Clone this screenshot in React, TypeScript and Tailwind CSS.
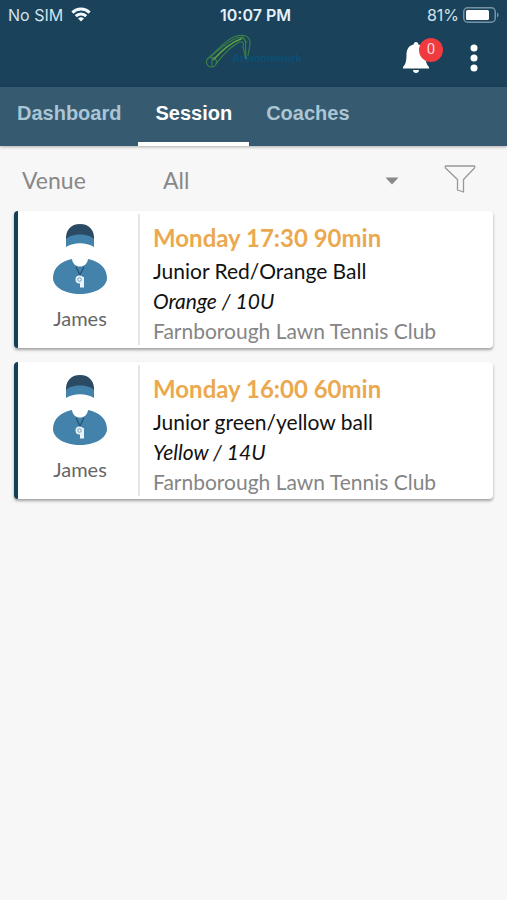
import React from "react";

type Session = {
  coach: string;
  time: string;
  title: string;
  level: string;
  venue: string;
};

const sessions: Session[] = [
  {
    coach: "James",
    time: "Monday 17:30 90min",
    title: "Junior Red/Orange Ball",
    level: "Orange / 10U",
    venue: "Farnborough Lawn Tennis Club",
  },
  {
    coach: "James",
    time: "Monday 16:00 60min",
    title: "Junior green/yellow ball",
    level: "Yellow / 14U",
    venue: "Farnborough Lawn Tennis Club",
  },
];

function StatusBar() {
  return (
    <div className="grid h-7 grid-cols-[1fr_auto_1fr] items-center px-2 pt-px font-['Inter',sans-serif] text-[16px] leading-5 text-[#d3e2ec]">
      <div className="flex items-center gap-2">
        <span>No SIM</span>
        <svg viewBox="0 0 20 15" className="h-[15px] w-5" fill="none" stroke="#f4f9fc" strokeWidth="3">
          <path d="M1.4 5.6a12.3 12.3 0 0 1 17.2 0" />
          <path d="M4.8 9.1a7.4 7.4 0 0 1 10.4 0" />
          <path d="M10 14.6 7 11.6a4.3 4.3 0 0 1 6 0Z" fill="#f4f9fc" stroke="none" />
        </svg>
      </div>
      <div className="pl-1 text-center font-semibold whitespace-nowrap text-[#e6f0f6]">10:07 PM</div>
      <div className="flex items-center justify-end gap-1">
        <span>81%</span>
        <svg viewBox="0 0 36 16" className="h-4 w-9" fill="none">
          <rect x="0.75" y="0.75" width="31.5" height="14.5" rx="4" stroke="#7793a5" strokeWidth="1.5" />
          <rect x="3" y="3" width="23" height="10" rx="1.5" fill="#fff" />
          <path d="M34 5.5c2 .8 2 4.2 0 5Z" fill="#7793a5" />
        </svg>
      </div>
    </div>
  );
}

function Logo() {
  return (
    <svg viewBox="0 0 96 48" className="h-12 w-24" fill="none" role="img" aria-label="Club logo">
      <text x="26" y="28" fill="#0a5075" fontSize="11" fontWeight="700" fontFamily="Liberation Sans, sans-serif">
        Anhomework
      </text>
      <path d="M34 32h48" stroke="#0d4b6b" />
      <g stroke="#3c8149" strokeWidth="1.1">
        <circle cx="5.5" cy="28" r="5" />
        <path d="M1.5 25C10 18 19 6 29 2.5c8-2.500 14-1 15 5 .5 5-1.500 9-2 14" />
        <path d="M4 23C14 15 22 7 31 4c7-2 9 2 8.500 7L40 25" />
        <path d="M10 30C16 22 24 12 34 8c4-1 3.500 2 3 5L40 25" />
        <path d="M6 23v10" />
        <path d="M7 26C15 18 23 9 36 4.5" stroke="#62a33b" strokeWidth="1.6" />
        <path d="M36 2l5 7" />
      </g>
    </svg>
  );
}

function CoachIcon() {
  return (
    <svg viewBox="0 0 54 70" className="h-[70px] w-[54px]" aria-hidden="true">
      <path d="M13 17C12 6 18 0 27 0s15 6 14 17Z" fill="#2b4a63" />
      <path d="M13 15c5-6 23-6 28 0v8c-8-5-20-5-28 0Z" fill="#4382ab" />
      <path d="M19 35C8 37 0 44 0 54c0 9 12 16 27 16s27-7 27-16c0-10-8-17-19-19-1 10-15 10-16 0Z" fill="#4382ab" />
      <path d="M23 43l4 8 4-8" fill="none" stroke="#26516f" strokeWidth="1.2" />
      <circle cx="26.5" cy="55.5" r="4" fill="#e9f3fa" />
      <path d="M26 53h5v10.5h-4V58Z" fill="#e9f3fa" />
      <circle cx="26.5" cy="55.5" r="1.8" fill="none" stroke="#6f9fc4" />
    </svg>
  );
}

function SessionCard({ session }: { session: Session }) {
  return (
    <article className="flex rounded-[4px] border-l-4 border-[#143f5a] bg-white font-['Lato',sans-serif] shadow-[0_2px_3px_rgba(0,0,0,0.35)]">
      <div className="my-[3px] flex w-[122px] shrink-0 flex-col items-center border-r-2 border-[#e6e6e6] pt-[10px] pl-1">
        <CoachIcon />
        <span className="mt-3 text-[20px] leading-6 text-[#666]">{session.coach}</span>
      </div>
      <div className="min-w-0 flex-1 pt-[11px] pb-[2px] pl-[13px] text-[21px] leading-[30px] text-[#111]">
        <h2 className="mb-[2px] text-[24px] leading-8 font-bold text-[#eba94f]">{session.time}</h2>
        <p>{session.title}</p>
        <p className="italic">{session.level}</p>
        <p className="text-[#858585]">{session.venue}</p>
      </div>
    </article>
  );
}

const tabs = ["Dashboard", "Session", "Coaches"];

export default function App() {
  return (
    <div className="min-h-screen bg-[#f7f7f7]">
      <header className="bg-[#1a425b]">
        <StatusBar />
        <div className="grid h-[59px] grid-cols-[1fr_auto_1fr] items-center">
          <span />
          <Logo />
          <div className="flex items-center justify-end gap-[27px] pr-[29px]">
            <button aria-label="Notifications, 0 unread" className="relative h-10 w-11">
              <svg viewBox="0 0 26 31" className="mb-px ml-1 h-[31px] w-[26px]" fill="#fff">
                <path d="M13 0c1.500 0 2.300 1 2.300 2.500 5 1.200 7.200 5 7.200 10 0 7 1 10 3.500 12.500V26.500H0V25c2.500-2.500 3.500-5.500 3.500-12.500 0-5 2.200-8.800 7.200-10C10.700 1 11.500 0 13 0Z" />
                <path d="M10 28h6c0 4-6 4-6 0Z" />
              </svg>
              <span className="absolute top-0 right-0 flex size-6 items-center justify-center rounded-full bg-[#ef3a40] font-['Roboto',sans-serif] text-[15px] text-[#ffd6d6]">
                0
              </span>
            </button>
            <button aria-label="More options">
              <svg viewBox="0 0 8 28" className="h-7 w-2" fill="#fff">
                <circle cx="4" cy="4" r="3.5" />
                <circle cx="4" cy="14" r="3.5" />
                <circle cx="4" cy="24" r="3.5" />
              </svg>
            </button>
          </div>
        </div>
      </header>

      <nav className="flex h-[59px] bg-[#365a70] font-['Liberation_Sans',Arial,sans-serif] text-[20px] font-bold shadow-[0_1px_3px_rgba(0,0,0,0.3)]">
        {tabs.map((tab) => (
          <button
            key={tab}
            aria-current={tab === "Session" ? "page" : undefined}
            className={
              tab === "Session"
                ? "border-b-4 border-white px-[17px] pb-1 text-white"
                : "border-b-4 border-transparent px-[17px] pb-1 text-[#abc5d4]"
            }
          >
            {tab}
          </button>
        ))}
      </nav>

      <main className="px-[14px]">
        <div className="flex h-[65px] items-center pt-1 pr-[17px] pl-2 font-['Lato',sans-serif] text-[23px] text-[#888]">
          <label htmlFor="venue" className="w-[141px]">
            Venue
          </label>
          <div className="relative flex-1">
            <select id="venue" className="w-full appearance-none bg-transparent">
              <option>All</option>
            </select>
            <svg viewBox="0 0 14 8" className="pointer-events-none absolute top-[14px] right-0 h-2 w-[14px]" fill="#888">
              <path d="M0.5 0.5h13L7 7.5Z" />
            </svg>
          </div>
          <button aria-label="Filter" className="-mt-1 ml-[45px]">
            <svg viewBox="0 0 32 28" className="h-7 w-8" fill="none" stroke="#999" strokeWidth="1.3" strokeLinejoin="round">
              <path d="M2 1h28c1 0 1 1 .5 2L19.5 14.5v12.500l-6-2V14.500L1.500 3C1 2 1 1 2 1Z" />
            </svg>
          </button>
        </div>
        <div className="flex flex-col gap-[14px]">
          {sessions.map((s) => (
            <SessionCard key={s.time} session={s} />
          ))}
        </div>
      </main>
    </div>
  );
}
